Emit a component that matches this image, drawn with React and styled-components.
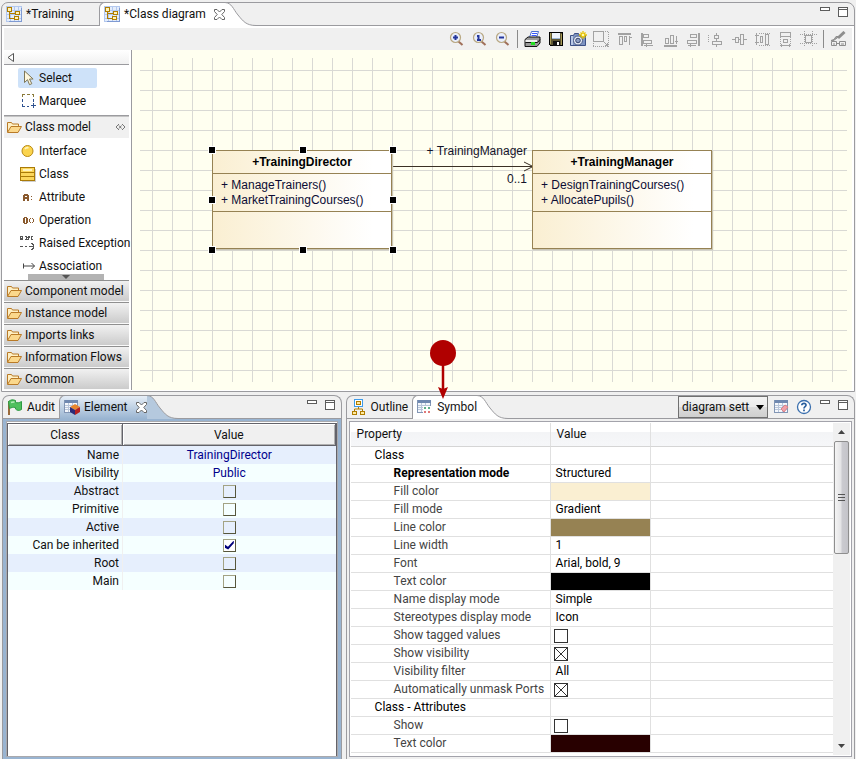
import React from "react";
import styled, { createGlobalStyle, css } from "styled-components";

const LINE = "#9b9b9f";
const FRAME = "#99b4d1";

const GlobalStyle = createGlobalStyle`
  *, *::before, *::after { box-sizing: border-box; }
  body {
    margin: 0;
    background: #f0f0f0;
    color: #111;
    font: 12px/18px Roboto, "Open Sans", sans-serif;
  }
  button, select, input { font: inherit; color: inherit; margin: 0; }
  button { padding: 0; border: 0; background: none; }
  svg { display: block; flex: none; }
`;

/* ---------- workbench frame ---------- */

const Workbench = styled.div`
  min-height: 100vh;
  display: flex;
  flex-direction: column;
  gap: 3px;
  padding: 2px 1px 0;
`;

const Views = styled.div`
  flex: 1;
  display: grid;
  grid-template-columns: 2fr 3fr;
  gap: 4px;
  padding-left: 1px;
`;

const Pane = styled.section`
  display: flex;
  flex-direction: column;
  min-width: 0;
  border: 1px solid ${LINE};
  border-bottom-width: ${(p) => (p.$open ? 0 : "1px")};
  border-radius: 7px 8px 0 0;
`;

const TabBar = styled.div`
  display: flex;
  height: 23px;
  border-bottom: 1px solid ${LINE};
`;

const TabButton = styled.button`
  display: flex;
  align-items: center;
  gap: 4px;
  height: 22px;
  padding-left: 4px;
  white-space: nowrap;
  ${(p) =>
    p.$active &&
    css`
      height: 24px;
      margin-top: -1px;
      padding-bottom: 1px;
      border-left: 1px solid ${LINE};
      border-top: 1px solid ${LINE};
      border-radius: 6px 0 0 0;
      background: ${p.$fill};
      position: relative;
    `}
`;

const CloseMark = styled.svg`
  margin-left: 4px;
`;

const TabCurve = styled.svg`
  margin-top: -1px;
`;

const TabGap = styled.span`
  width: ${(p) => p.$size}px;
`;

const TabTools = styled.div`
  margin-left: auto;
  display: flex;
  align-items: flex-start;
  gap: 8px;
  padding: 4px 6px 0 0;
`;

const ViewTools = styled.div`
  margin-left: auto;
  display: flex;
  align-items: center;
  gap: 6px;
`;

/* ---------- editor ---------- */

const EditorBody = styled.div`
  background: #fff;
  padding: 2px 2px 1px;
`;

const Toolbar = styled.div`
  display: flex;
  justify-content: flex-end;
  align-items: center;
  gap: 6px;
  height: 22px;
  padding-right: 5px;
  background: #f0f0f0;
`;

const ToolButton = styled.button`
  width: 17px;
  height: 18px;
  display: grid;
  place-items: center;
`;

const ToolSeparator = styled.span`
  width: 1px;
  height: 18px;
  background: #8a8a8a;
`;

const EditorMain = styled.div`
  display: flex;
`;

const Palette = styled.aside`
  width: 128px;
  flex: none;
  padding-right: 2px;
  border-right: 1px solid ${LINE};
`;

const PaletteTop = styled.div`
  height: 15px;
  padding: 3px 3px;
  border-bottom: 1px solid ${LINE};
  background: linear-gradient(#fff, #f1f1f1);
`;

const PaletteGroup = styled.div`
  padding: 2px 0 ${(p) => (p.$ruled ? 4 : 0)}px 14px;
  border-bottom: 1px solid ${(p) => (p.$ruled ? LINE : "transparent")};
`;

const PaletteItem = styled.button`
  display: flex;
  align-items: center;
  gap: 3px;
  width: ${(p) => (p.$selected ? "79px" : "auto")};
  height: 20px;
  margin: ${(p) => (p.$first ? 1 : 3)}px 0 0;
  padding-left: 2px;
  border-radius: 2px;
  white-space: nowrap;
  background: ${(p) => (p.$selected ? "#cee2f9" : "none")};
`;

const Drawer = styled.button`
  display: flex;
  align-items: center;
  gap: 3px;
  width: 100%;
  height: 22px;
  padding-left: 2px;
  white-space: nowrap;
  border-top: 1px solid #8f8f8f;
  border-bottom: 1px solid #fafafa;
  background: linear-gradient(#f1f1f1, #cbcbcb);
`;

const OpenDrawer = styled(Drawer)`
  background: #f0f0f0;
  border-color: #c4c4c4 transparent transparent;
`;

const PinSlot = styled.span`
  margin-left: auto;
  padding-right: 3px;
`;

const ScrollDown = styled.button`
  display: grid;
  place-items: center;
  width: 76px;
  height: 6px;
  margin: -3px 0 0 24px;
  background: #b3b3b3;
`;

const Canvas = styled.div`
  position: relative;
  flex: 1;
  min-width: 0;
  padding: 8px 5px 8px 8px;
  background: #fffff0;
  font: 12px/15px "Liberation Sans", Arial, sans-serif;
  display: flex;
`;

const Grid = styled.div`
  flex: 1;
  background-image: linear-gradient(90deg, #d9d9d4 1px, transparent 1px),
    linear-gradient(#d9d9d4 1px, transparent 1px);
  background-size: 20px 20px;
  background-position: 12px 12px;
`;

const ClassNode = styled.div`
  position: absolute;
  left: ${(p) => p.$x}px;
  top: ${(p) => p.$y}px;
  width: 180px;
  color: #0c0c34;
  border: 1px solid #968253;
  background: linear-gradient(90deg, #faefd2, #fff 90%);
  box-shadow: 1px 1px 1px #c9c5b4;
`;

const ClassName = styled.div`
  height: 23px;
  line-height: 23px;
  text-align: center;
  font-weight: bold;
  color: #000;
  border-bottom: 1px solid #968253;
`;

const ClassMembers = styled.div`
  height: 38px;
  padding: 4px 8px;
  border-bottom: 1px solid #968253;
`;

const ClassRest = styled.div`
  height: 36px;
`;

const Selection = styled.div`
  position: absolute;
  inset: -1px -2px -2px -1px;
`;

const Handle = styled.span`
  position: absolute;
  left: ${(p) => p.$h}%;
  top: ${(p) => p.$v}%;
  width: 8px;
  height: 8px;
  margin: -4px;
  background: #000;
  border: 1px solid #fff;
`;

const LinkLine = styled.svg`
  position: absolute;
  left: 261px;
  top: 109px;
`;

const LinkLabel = styled.span`
  position: absolute;
  top: ${(p) => p.$y}px;
  left: 275px;
  width: 120px;
  text-align: right;
  color: #14142a;
`;

const Pointer = styled.svg`
  position: absolute;
  left: 16px;
  bottom: 20px;
  z-index: 2;
  pointer-events: none;
`;

/* ---------- element view ---------- */

const BlueFrame = styled.div`
  flex: 1;
  display: flex;
  padding: 2px 3px 2px;
  background: ${FRAME};
`;

const ElementSheet = styled.div`
  flex: 1;
  background: #fff;
  border: 1px solid #a9a9ad;
  padding-top: 1px;
  display: flex;
`;

const SheetInner = styled.div`
  flex: 1;
  border: solid #63636a;
  border-width: 1px 1px 0;
`;

const ElementTable = styled.table`
  width: 100%;
  table-layout: fixed;
  border-collapse: separate;
  border-spacing: 0;

  thead th {
    height: 22px;
    padding: 0;
    font-weight: normal;
    background: #f0f0f0;
    border: solid #63636a;
    border-width: 0 1px 1px 0;
    box-shadow: inset 1px 1px #fff, inset -1px -1px #b0b0b0;
  }
  thead th:first-child { width: 115px; }
  tbody th {
    height: 18px;
    padding: 0 3px 0 0;
    text-align: right;
    font-weight: normal;
    border-right: 1px solid #f0f0f0;
  }
  tbody td { padding: 0; text-align: center; color: #00008b; }
  tbody tr:nth-child(odd) { background: #e6effd; }
  tbody tr:nth-child(even) { background: #f5ffff; }
`;

const ElementCheck = styled.input.attrs({ type: "checkbox" })`
  appearance: none;
  display: block;
  width: 13px;
  height: 13px;
  margin: 0 auto;
  border: 1px solid;
  border-color: #a3a384 #56563c #56563c #a3a384;
  &:checked { background: #fff; }
  &:checked::before {
    content: "";
    display: block;
    height: 9px;
    margin: 1px;
    background: #00007a;
    clip-path: polygon(0 45%, 35% 70%, 100% 0, 100% 30%, 38% 100%, 0 80%);
  }
`;

/* ---------- symbol view ---------- */

const SettingsPick = styled.span`
  position: relative;
  display: block;
`;

const SettingsSelect = styled.select`
  appearance: none;
  display: block;
  width: 90px;
  height: 22px;
  padding: 0 16px 0 3px;
  border: 1px solid #707070;
  border-radius: 0;
  background: linear-gradient(#f3f3f3, #ebebeb 50%, #dcdcdc 50%, #cfcfcf);
`;

const SettingsArrow = styled.svg`
  position: absolute;
  right: 4px;
  top: 9px;
  pointer-events: none;
`;

const SymbolFrame = styled.div`
  flex: 1;
  display: flex;
  padding: 2px 2px 2px 2px;
`;

const SymbolSheet = styled.div`
  flex: 1;
  display: flex;
  min-width: 0;
  padding: 1px;
  background: #fff;
  border: 1px solid #a3a3ab;
`;

const PropertyTable = styled.table`
  flex: 1;
  width: 100%;
  table-layout: fixed;
  border-collapse: separate;
  border-spacing: 0;
  align-self: flex-start;

  th, td {
    height: 18px;
    padding: 0;
    line-height: 17px;
    text-align: left;
    font-weight: normal;
    white-space: nowrap;
    border: solid #e0e0e0;
    border-width: 0 1px 1px 0;
  }
  th:last-child, td:last-child { border-right: 0; }
  thead th {
    height: 24px;
    padding-left: 6px;
    border-bottom-color: #d5d5d5;
    background: linear-gradient(#fff 40%, #f3f4f6 40%, #f6f7f9);
  }
`;

const PropertyName = styled.th`
  && {
    padding-left: ${(p) => (p.$group ? 24 : 43)}px;
    color: ${(p) => (p.$group || p.$strong ? "#000" : "#444")};
    font-weight: ${(p) => (p.$strong ? "bold" : "normal")};
  }
`;

const PropertyValue = styled.td`
  && {
    padding-left: 5px;
    color: #000;
    background: ${(p) => p.$swatch || "none"};
  }
`;

const PropertyCheck = styled.input.attrs({ type: "checkbox" })`
  appearance: none;
  display: block;
  width: 14px;
  height: 14px;
  margin-left: -2px;
  border: 1px solid #333;
  &:checked {
    background: linear-gradient(45deg, transparent 47%, #333 47%, #333 53%, transparent 53%),
      linear-gradient(-45deg, transparent 47%, #333 47%, #333 53%, transparent 53%);
  }
`;

const ScrollTrack = styled.div`
  flex: none;
  width: 17px;
  display: flex;
  flex-direction: column;
  background: #f0f0f0;
`;

const ScrollArrow = styled.button`
  height: 18px;
  display: grid;
  place-items: center;
`;

const ScrollThumb = styled.div`
  height: 113px;
  width: 15px;
  margin: 0 auto auto;
  display: grid;
  place-items: center;
  border: 1px solid #8e8e8e;
  border-radius: 2px;
  background: linear-gradient(90deg, #f4f4f4, #e3e3e5 48%, #cbcbd0 52%, #c4c4c9);
`;

/* ---------- drawings ---------- */

const Svg = ({ w = 16, h = 16, smooth, children }) => (
  <svg width={w} height={h} viewBox={`0 0 ${w} ${h}`} fill="none" shapeRendering={smooth ? "auto" : "crispEdges"} aria-hidden="true">
    {children}
  </svg>
);

const DiagramIcon = () => (
  <Svg>
    <rect x="0" y="0" width="16" height="16" fill="#e4edfb" />
    <path d="M.5 .5h15v15H.5zM.5 4.500h15M.5 8.500h15M.5 12.500h15M4.500 .5v15M8.500 .5v15M12.500 .5v15" stroke="#b3c8ee" />
    <path d="M15.500 2v13.500H3" stroke="#7f9ad2" />
    <rect x="1.500" y="1.500" width="4" height="4" fill="#fff3b8" stroke="#b07d00" />
    <path d="M3.500 6v6.500h5M3.500 7.500h6" stroke="#b07d00" />
    <rect x="9.500" y="5.500" width="4" height="3" fill="#fff3b8" stroke="#b07d00" />
    <rect x="8.500" y="10.500" width="4" height="3" fill="#fff3b8" stroke="#b07d00" />
  </Svg>
);

const Close = () => (
  <CloseMark width="11" height="11" viewBox="0 0 11 11" fill="#fff" stroke="#666" aria-hidden="true">
    <path d="M.5 .5h2.500L5.500 3 8 .5h2.500v2L7.800 5.500l2.700 3v2H8L5.500 8 3 10.500H.5v-2l2.700-3L.5 2.500z" />
  </CloseMark>
);

const Curve = ({ fill }) => (
  <TabCurve width="31" height="24" viewBox="0 0 31 24" fill="none" aria-hidden="true">
    <path d="M0 .5C7 1 8 7 13 13S21 23.500 31 23.500V24H0z" fill={fill} />
    <path d="M0 .5C7 1 8 7 13 13S21 23.500 31 23.500" stroke={LINE} />
  </TabCurve>
);

const MinimizeIcon = () => (
  <Svg w={10} h={4}><rect x=".5" y=".5" width="9" height="3" fill="#fff" stroke="#5c5c5c" /></Svg>
);
const MaximizeIcon = () => (
  <Svg w={10} h={10}>
    <rect x=".5" y=".5" width="9" height="9" fill="#fff" stroke="#5c5c5c" />
    <path d="M0 2.500h10" stroke="#5c5c5c" />
  </Svg>
);

const Zoom = ({ sign }) => (
  <Svg smooth>
    <path d="M9.500 10.500l4 3.500" stroke="#a0705a" strokeWidth="2" />
    <circle cx="6.500" cy="6.500" r="5" fill="#e9eefb" stroke="#b9a882" strokeWidth="1.200" />
    <path d={sign} stroke="#24369c" strokeWidth="2" />
  </Svg>
);

const PrintIcon = () => (
  <Svg w={17} h={16} smooth>
    <path d="M5.500 6.500l2-6h7l-2 6" fill="#fff" stroke="#4b6ed0" />
    <path d="M8 2.500h5M7.500 4.500h5" stroke="#3658ff" />
    <path d="M1 8.500l3-2.500h12v6l-3 3.500H1z" fill="#9a9a9a" stroke="#111" />
    <path d="M1.500 9h11.500v2H1.500z" fill="#eee" />
    <path d="M1.500 11.500h12l2.500-3" stroke="#111" />
    <rect x="7" y="11" width="4" height="3" fill="#22e022" />
    <path d="M3 15.500h10" stroke="#111" />
  </Svg>
);
const SaveIcon = () => (
  <Svg>
    <path d="M1.500 1.500h13v13h-12l-1-1z" fill="#5c5533" stroke="#000" />
    <rect x="4" y="2" width="8" height="6" fill="#eef4fb" />
    <path d="M4 7.500h8" stroke="#9bb5d4" />
    <path d="M2.500 2v11M13.500 3v11" stroke="#a79a57" />
    <rect x="5" y="10" width="7" height="5" fill="#111" />
    <rect x="9" y="11" width="2" height="3" fill="#fff" />
  </Svg>
);
const CameraIcon = () => (
  <Svg w={17} smooth>
    <path d="M.5 4.500h3l1-2h4l1 2h6v10h-15z" fill="#7d93c2" stroke="#3c4f85" />
    <path d="M1 5h2v9H1z" fill="#b9c8e6" />
    <circle cx="8" cy="9.500" r="4.500" fill="#e8edf7" stroke="#4a5a86" />
    <circle cx="8" cy="9.500" r="2.300" fill="#8c9cc2" stroke="#33426c" />
    <path d="M13 0v8M9 4h8M10.500 1.500l5 5M15.500 1.500l-5 5" stroke="#e6c200" strokeWidth="1.300" />
    <circle cx="13" cy="4" r="1.300" fill="#fff9b0" />
  </Svg>
);

const G = "#a2a2a2";
const GrayIcon = ({ solid, dots, bars }) => (
  <Svg w={17}>
    {dots && <path d={dots} stroke={G} strokeDasharray="1 1" />}
    {solid && <path d={solid} stroke={G} />}
    {bars && <path d={bars} stroke={G} strokeWidth="2" />}
  </Svg>
);

const GRAY_TOOLS = [
  { name: "Resize to contents", solid: "M.5 .5h10v10H.5zM11.500 11.500l3 3M14.500 12v2.500H12", dots: "M12 .5h4M15.500 1v15M0 15.500h15M.5 12v3" },
  { name: "Align top", solid: "M3.500 5.500h3v8h-3zM8.500 5.500h2v5h-2zM13.500 5v9M12.500 6.500h3", bars: "M2 3h13" },
  { name: "Align left", solid: "M4.500 3.500h5v3h-5zM4.500 9.500h8v3h-8zM5 14.500h9M7.500 13v3", bars: "M3 2v13" },
  { name: "Align bottom", solid: "M3.500 7.500h3v5h-3zM8.500 4.500h3v8h-3zM14.500 5v8M13 10.500h3", bars: "M2 15h13" },
  { name: "Align right", solid: "M5.500 3.500h6v3h-6zM2.500 9.500h9v3h-9zM3 14.500h8M5.500 13v3", bars: "M14 2v13" },
  { name: "Align center", solid: "M8.500 2v2M6.500 4.500h4v3h-4zM8.500 8v2M4.500 10.500h9v3h-9zM8.500 14v2", dots: "M.5 4v8" },
  { name: "Align middle", solid: "M2 8.500h2M8 8.500h2M13 8.500h3M4.500 6.500h3v5h-3zM9.500 3.500h3v10h-3z", dots: "M.5 8.500h3" },
  { name: "Same height", solid: "M2.500 2v12M.5 4.500h4M.5 11.500h4M6.500 5.500h2v6h-2zM11.500 3.500h3v10h-3z", dots: "M5 2.500h12M5 14.500h12" },
  { name: "Same width", solid: "M3.500 1.500h10v4h-10zM6.500 8.500h4v3h-4zM3 14.500h11M4.500 13v3M12.500 13v3", dots: "M3.500 6v7M13.500 6v7" },
  { name: "Snap to grid", solid: "M5.500 4.500h6v7h-6z", dots: "M0 3.500h17M0 12.500h17M4.500 0v16M12.500 0v16" },
];

const StyleBrushIcon = () => (
  <Svg w={17} smooth>
    <path d="M14.500 1L8 7" stroke="#8e8e8e" strokeWidth="3" />
    <path d="M9 5.500L3 10l-2-.500 3-1 2-3z" fill={G} stroke="#8e8e8e" />
    <path d="M1.500 10.500h5v4h-5zM9.500 10.500h6v4h-6zM3 13h2M11 13h3M6.500 12.500h3" stroke="#8e8e8e" />
  </Svg>
);

const CursorIcon = () => (
  <Svg smooth>
    <path d="M4.500 1v11.500l3-2.800 2 5 2.300-1-2.300-4.700h3.600z" fill="#fff7dc" stroke="#7d7658" />
  </Svg>
);
const MarqueeIcon = () => (
  <Svg>
    <path d="M2.500 4V1.500H5M7 1.500h3M12 1.500h1.500V4" stroke="#8a7a3a" />
    <path d="M2.500 6v3M2.500 11v2.500H5M7 13.500h2M13.500 6v3M11 12.500h5M13.500 10v5" stroke="#2f5290" />
  </Svg>
);
const FolderIcon = () => (
  <Svg smooth>
    <path d="M1.500 13V3.500h4l1 1.500h6v2.500" fill="#fff0c4" stroke="#b97a27" />
    <path d="M1.500 13.500l3.500-6h10.500l-3.500 6z" fill="#fbd88c" stroke="#b97a27" />
  </Svg>
);
const InterfaceIcon = () => (
  <Svg smooth><circle cx="7.500" cy="8" r="5.500" fill="#fbd44e" stroke="#b98a15" /><path d="M5 6c1-1.500 2.500-1.500 3.500-1" stroke="#fff3bd" strokeWidth="1.500" /></Svg>
);
const ClassIcon = () => (
  <Svg>
    <rect x=".5" y="1.500" width="14" height="13" fill="#fbd65c" stroke="#a97a08" />
    <path d="M1 6.500h13M1 10.500h13" stroke="#a97a08" />
    <path d="M3 4h9" stroke="#fff3bf" strokeWidth="2" />
    <path d="M15.500 3v12.500H2" stroke="#cfcfcf" />
  </Svg>
);
const AttributeIcon = () => (
  <Svg>
    <path d="M3 6h1V5h4v1h1v6H7v-2H5v2H3zM5 7v1h2V7z" fill="#8a5a2e" fillRule="evenodd" />
    <path d="M11 7h1v1h-1zM11 10h1v1h-1z" fill="#8a5a2e" />
  </Svg>
);
const OperationIcon = () => (
  <Svg>
    <path d="M3 6h1V5h3v1h1v5H7v1H4v-1H3zM5 6v5h1V6z" fill="#8a5a2e" fillRule="evenodd" />
    <path d="M10.500 6v1M9.500 7v3M10.500 10v1M12.500 6v1M13.500 7v3M12.500 10v1" stroke="#8a5a2e" />
  </Svg>
);
const ExceptionIcon = () => (
  <Svg>
    <path d="M3 4.500H.5v-3h2v1.500H1M5 1.500h1v3H5M8 1.500h1v1M7 2h1v2H7M9 4.500H8M13 1.500h-2v3h2" stroke="#555" />
    <path d="M0 11.500h3M5 11.500h2M9 11.500h5M11 8.500h1v1h1v1h1M11 14.500h1v-1h1v-1h1" stroke="#555" />
  </Svg>
);
const AssociationIcon = () => (
  <Svg smooth><path d="M3.500 5.500v5M3.500 8h11M11.500 5l3 3-3 3" stroke="#444" /></Svg>
);
const PinIcon = () => (
  <Svg w={11} h={8} smooth><path d="M4 1L1 4l3 3M7 1l3 3-3 3M4 2.500L6.500 5.500M6.500 2.500L4 5.500" stroke="#777" /></Svg>
);
const CollapseIcon = () => (
  <Svg w={8} h={10} smooth><path d="M6.500 .5v8L1 4.500z" fill="#fff" stroke="#555" /></Svg>
);
const FlagIcon = () => (
  <Svg smooth>
    <path d="M2 2v14" stroke="#9a6a3b" strokeWidth="2" />
    <path d="M1.500 2.500C4 .5 6 .5 8.500 1.500v2C10.500 4 12 4 14.500 2.500v8C12 12 10 11.500 8.500 10V8.500C6 8 4.500 8.500 2.500 9.500z" fill="#4fc05e" stroke="#2d9a43" />
    <path d="M4 3.500c1.500-.7 2.500-.7 3.500-.3" stroke="#b4ecb9" strokeWidth="1.500" />
  </Svg>
);
const SheetRows = () => (
  <>
    <rect x=".5" y="1.500" width="13" height="12" fill="#f4f7fc" stroke="#8296b5" />
    <rect x="1" y="1" width="13" height="3" fill="#6f88b0" />
    <path d="M1 6.500h12M1 8.500h12M1 10.500h12M4.500 4v9M8.500 4v9" stroke="#b9c6da" />
  </>
);
const ElementIcon = () => (
  <Svg smooth>
    <SheetRows />
    <path d="M6 8l5-3 5 3-5 3z" fill="#e8862e" />
    <path d="M6 8l5 3v5l-5-3z" fill="#2c2a78" />
    <path d="M16 8l-5 3v5l5-3z" fill="#b32020" />
  </Svg>
);
const OutlineIcon = () => (
  <Svg smooth>
    <rect x="3.500" y=".5" width="8" height="7" fill="#fff" stroke="#3d9bea" />
    <rect x="5.500" y="2.500" width="4" height="3" fill="#ffe9a0" stroke="#b07d00" />
    <path d="M7.500 8v2M3.500 12v-2h8v2" stroke="#b07d00" />
    <rect x="1.500" y="12.500" width="4" height="3" fill="#ffe9a0" stroke="#b07d00" />
    <rect x="9.500" y="12.500" width="4" height="3" fill="#ffe9a0" stroke="#b07d00" />
  </Svg>
);
const SymbolIcon = () => (
  <Svg>
    <SheetRows />
    <rect x="6" y="7" width="8" height="8" fill="#fff" />
    <path d="M7 8.500h2M11 8.500h2" stroke="#5fae8a" strokeWidth="2" />
    <path d="M7 12.500h2M11 12.500h2" stroke="#e07878" strokeWidth="2" />
  </Svg>
);
const ResetIcon = () => (
  <Svg smooth>
    <SheetRows />
    <path d="M7 10l4-4 3 2-4 5z" fill="#f2a0a8" stroke="#d88088" />
  </Svg>
);
const HelpIcon = () => (
  <Svg smooth>
    <circle cx="8" cy="8" r="6.500" fill="#fff" stroke="#3a6fae" strokeWidth="1.300" />
    <path d="M5.800 6.300C6 3.700 10.300 3.800 10 6.300 9.900 7.600 8 7.700 8 9.400M8 10.600v1.600" stroke="#2a5f9e" strokeWidth="1.700" />
  </Svg>
);

/* ---------- parts ---------- */

const Tab = ({ icon, label, active, closable, fill = "#fff", curveFill = fill, children }) => (
  <>
    <TabButton type="button" role="tab" aria-selected={!!active} $active={active} $fill={fill}>
      {icon}
      <span>{label}</span>
      {closable && <Close />}
      {children}
    </TabButton>
    {active && <Curve fill={curveFill} />}
  </>
);

const WindowButtons = () => (
  <TabTools>
    <button type="button" aria-label="Minimize"><MinimizeIcon /></button>
    <button type="button" aria-label="Maximize"><MaximizeIcon /></button>
  </TabTools>
);

const Tool = ({ name, children }) => (
  <ToolButton type="button" aria-label={name} title={name}>{children}</ToolButton>
);

const UmlClass = ({ name, members, x, y, selected }) => (
  <ClassNode $x={x} $y={y}>
    <ClassName>+{name}</ClassName>
    <ClassMembers>
      {members.map((m) => <div key={m}>+ {m}()</div>)}
    </ClassMembers>
    <ClassRest />
    {selected && (
      <Selection>
        {[0, 50, 100].flatMap((h) =>
          [0, 50, 100].map((v) => (h === 50 && v === 50 ? null : <Handle key={`${h}-${v}`} $h={h} $v={v} />))
        )}
      </Selection>
    )}
  </ClassNode>
);

const MODEL_ITEMS = [
  ["Interface", InterfaceIcon],
  ["Class", ClassIcon],
  ["Attribute", AttributeIcon],
  ["Operation", OperationIcon],
  ["Raised Exception", ExceptionIcon],
  ["Association", AssociationIcon],
];
const DRAWERS = ["Component model", "Instance model", "Imports links", "Information Flows", "Common"];

const ELEMENT_ROWS = [
  ["Name", "TrainingDirector"],
  ["Visibility", "Public"],
  ["Abstract", false],
  ["Primitive", false],
  ["Active", false],
  ["Can be inherited", true],
  ["Root", false],
  ["Main", false],
];

const SYMBOL_ROWS = [
  { name: "Class", group: true },
  { name: "Representation mode", strong: true, value: "Structured" },
  { name: "Fill color", swatch: "#faefd2" },
  { name: "Fill mode", value: "Gradient" },
  { name: "Line color", swatch: "#968253" },
  { name: "Line width", value: "1" },
  { name: "Font", value: "Arial, bold, 9" },
  { name: "Text color", swatch: "#000" },
  { name: "Name display mode", value: "Simple" },
  { name: "Stereotypes display mode", value: "Icon" },
  { name: "Show tagged values", check: false },
  { name: "Show visibility", check: true },
  { name: "Visibility filter", value: "All" },
  { name: "Automatically unmask Ports", check: true },
  { name: "Class - Attributes", group: true },
  { name: "Show", check: false },
  { name: "Text color", swatch: "#280000" },
];

const Editor = () => (
  <Pane>
    <TabBar role="tablist">
      <Tab icon={<DiagramIcon />} label="*Training" />
      <TabGap $size={25} />
      <Tab icon={<DiagramIcon />} label="*Class diagram" active closable />
      <WindowButtons />
    </TabBar>
    <EditorBody>
      <Toolbar role="toolbar">
        <Tool name="Zoom in"><Zoom sign="M6.500 4v5M4 6.500h5" /></Tool>
        <Tool name="Zoom 100%"><Zoom sign="M5 5h1.500v4M5 9h4" /></Tool>
        <Tool name="Zoom out"><Zoom sign="M4 6.500h5" /></Tool>
        <ToolSeparator />
        <Tool name="Print"><PrintIcon /></Tool>
        <Tool name="Save"><SaveIcon /></Tool>
        <Tool name="Save as image"><CameraIcon /></Tool>
        {GRAY_TOOLS.map(({ name, ...shape }) => (
          <Tool key={name} name={name}><GrayIcon {...shape} /></Tool>
        ))}
        <ToolSeparator />
        <Tool name="Copy style"><StyleBrushIcon /></Tool>
      </Toolbar>
      <EditorMain>
        <Palette>
          <PaletteTop><CollapseIcon /></PaletteTop>
          <PaletteGroup $ruled>
            <PaletteItem type="button" $first $selected><CursorIcon />Select</PaletteItem>
            <PaletteItem type="button"><MarqueeIcon />Marquee</PaletteItem>
          </PaletteGroup>
          <OpenDrawer type="button"><FolderIcon />Class model<PinSlot><PinIcon /></PinSlot></OpenDrawer>
          <PaletteGroup>
            {MODEL_ITEMS.map(([label, Icon], i) => (
              <PaletteItem type="button" key={label} $first={i === 0}><Icon />{label}</PaletteItem>
            ))}
          </PaletteGroup>
          <ScrollDown type="button" aria-label="Scroll down">
            <Svg w={8} h={4} smooth><path d="M0 0h8L4 4z" fill="#555" /></Svg>
          </ScrollDown>
          {DRAWERS.map((d) => <Drawer type="button" key={d}><FolderIcon />{d}</Drawer>)}
        </Palette>
        <Canvas>
          <Grid />
          <LinkLine width="141" height="14" viewBox="0 0 141 14" fill="none" stroke="#3a3024" aria-hidden="true">
            <path d="M0 7.500h140M131 3l9 4.500-9 4.500" />
          </LinkLine>
          <LinkLabel $y={94}>+ TrainingManager</LinkLabel>
          <LinkLabel $y={122}>0..1</LinkLabel>
          <UmlClass name="TrainingDirector" members={["ManageTrainers", "MarketTrainingCourses"]} x={80} y={100} selected />
          <UmlClass name="TrainingManager" members={["DesignTrainingCourses", "AllocatePupils"]} x={400} y={100} />
        </Canvas>
      </EditorMain>
    </EditorBody>
  </Pane>
);

const ElementView = () => (
  <Pane $open>
    <TabBar role="tablist">
      <Tab icon={<FlagIcon />} label="Audit" />
      <TabGap $size={4} />
      <Tab icon={<ElementIcon />} label="Element" active closable fill={`linear-gradient(#e6eef7, ${FRAME})`} curveFill="#b5c9de" />
      <WindowButtons />
    </TabBar>
    <BlueFrame>
      <ElementSheet>
        <SheetInner>
          <ElementTable>
            <thead><tr><th scope="col">Class</th><th scope="col">Value</th></tr></thead>
            <tbody>
              {ELEMENT_ROWS.map(([name, value]) => (
                <tr key={name}>
                  <th scope="row">{name}</th>
                  <td>{typeof value === "boolean" ? <ElementCheck aria-label={name} defaultChecked={value} /> : value}</td>
                </tr>
              ))}
            </tbody>
          </ElementTable>
        </SheetInner>
      </ElementSheet>
    </BlueFrame>
  </Pane>
);

const SymbolView = () => (
  <Pane $open>
    <TabBar role="tablist">
      <Tab icon={<OutlineIcon />} label="Outline" />
      <TabGap $size={4} />
      <Tab icon={<SymbolIcon />} label="Symbol" active>
        <Pointer width="28" height="60" viewBox="0 0 28 60" aria-hidden="true">
          <circle cx="14" cy="14" r="13" fill="#b00000" />
          <path d="M14 26v24" stroke="#b00000" strokeWidth="2.500" />
          <path d="M9 48l5 2 5-2-5 12z" fill="#b00000" />
        </Pointer>
      </Tab>
      <ViewTools>
        <SettingsPick>
          <SettingsSelect aria-label="Settings"><option>diagram sett</option></SettingsSelect>
          <SettingsArrow width="8" height="5" viewBox="0 0 8 5" aria-hidden="true"><path d="M0 0h8L4 5z" /></SettingsArrow>
        </SettingsPick>
        <button type="button" aria-label="Reset"><ResetIcon /></button>
        <button type="button" aria-label="Help"><HelpIcon /></button>
      </ViewTools>
      <TabGap $size={8} />
      <div><WindowButtons /></div>
    </TabBar>
    <SymbolFrame>
      <SymbolSheet>
        <PropertyTable>
          <colgroup><col width="200" /><col width="100" /><col /></colgroup>
          <thead><tr><th scope="col">Property</th><th scope="col">Value</th><th aria-hidden="true" /></tr></thead>
          <tbody>
            {SYMBOL_ROWS.map((row, i) => (
              <tr key={i}>
                <PropertyName scope="row" $group={row.group} $strong={row.strong}>{row.name}</PropertyName>
                <PropertyValue $swatch={row.swatch}>
                  {"check" in row ? <PropertyCheck aria-label={row.name} defaultChecked={row.check} /> : row.value}
                </PropertyValue>
                <td />
              </tr>
            ))}
          </tbody>
        </PropertyTable>
        <ScrollTrack>
          <ScrollArrow type="button" aria-label="Scroll up"><Svg w={7} h={4} smooth><path d="M0 4h7L3.500 0z" fill="#444" /></Svg></ScrollArrow>
          <ScrollThumb>
            <Svg w={7} h={8}><path d="M0 .5h7M0 3.500h7M0 6.500h7" stroke="#555" /></Svg>
          </ScrollThumb>
          <ScrollArrow type="button" aria-label="Scroll down"><Svg w={7} h={4} smooth><path d="M0 0h7L3.500 4z" fill="#444" /></Svg></ScrollArrow>
        </ScrollTrack>
      </SymbolSheet>
    </SymbolFrame>
  </Pane>
);

export default function App() {
  return (
    <>
      <GlobalStyle />
      <Workbench>
        <Editor />
        <Views>
          <ElementView />
          <SymbolView />
        </Views>
      </Workbench>
    </>
  );
}
